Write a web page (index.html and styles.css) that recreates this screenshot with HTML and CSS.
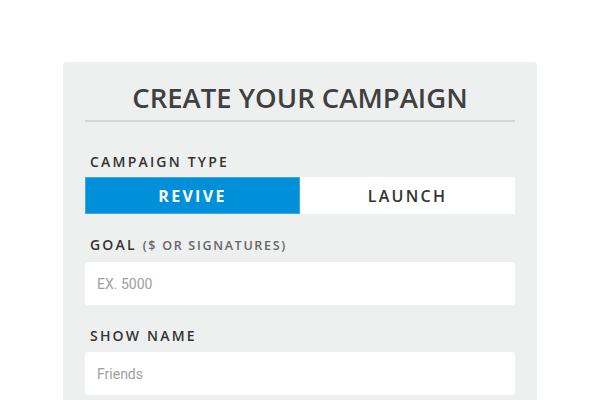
FILE: index.html
```html
<!DOCTYPE html>
<html>
<head>
<meta charset="utf-8">
<link rel="stylesheet" href="styles.css">
</head>
<body>
<div class="card">
  <h1 class="title">CREATE YOUR CAMPAIGN</h1>
  <div class="field">
    <div class="label">CAMPAIGN TYPE</div>
    <div class="toggle">
      <div class="opt active">REVIVE</div>
      <div class="opt">LAUNCH</div>
    </div>
  </div>
  <div class="field">
    <div class="label">GOAL <span class="sub">($ OR SIGNATURES)</span></div>
    <div class="input"><span class="ph">EX. 5000</span></div>
  </div>
  <div class="field">
    <div class="label">SHOW NAME</div>
    <div class="input"><span class="ph">Friends</span></div>
  </div>
</div>
</body>
</html>
```
FILE: styles.css
```css
html, body {
  margin: 0;
  padding: 0;
  background: #ffffff;
}
body {
  font-family: "Open Sans", sans-serif;
  color: #3a3a3a;
  height: 400px;
  overflow: hidden;
}
.card {
  margin: 62px 0 0 63px;
  width: 474px;
  height: 338px;
  background: #eef0f0;
  border-radius: 3px 3px 0 0;
  padding: 20px 22px 0;
  box-sizing: border-box;
}
.title {
  margin: 0;
  font-size: 27.5px;
  line-height: 32px;
  font-weight: 600;
  text-align: center;
  letter-spacing: 0;
  padding-bottom: 6px;
  border-bottom: 2px solid #d6d8d8;
  color: #404040;
}
.field {
  margin-top: 32px;
}
.field + .field {
  margin-top: 23px;
}
.label {
  font-size: 14px;
  line-height: 16px;
  font-weight: 600;
  letter-spacing: 2.2px;
  padding-left: 5px;
  color: #333;
}
.sub {
  font-size: 12.5px;
  color: #666;
  font-weight: 600;
  letter-spacing: 1.7px;
}
.toggle {
  margin-top: 7px;
  display: flex;
  height: 37px;
}
.opt {
  flex: 1;
  display: flex;
  align-items: center;
  justify-content: center;
  background: #fff;
  font-size: 16px;
  font-weight: 600;
  letter-spacing: 2.3px;
  color: #333;
}
.opt.active {
  background: #0090d9;
  color: #fff;
  font-weight: 700;
  box-shadow: inset 0 0 0 1px #3aaae6;
}
.input {
  margin-top: 8px;
  height: 43px;
  background: #fff;
  border-radius: 3px;
  display: flex;
  align-items: center;
  padding-left: 12px;
}
.ph {
  font-family: Roboto, sans-serif;
  font-size: 14px;
  color: #a0a0a0;
}
```
